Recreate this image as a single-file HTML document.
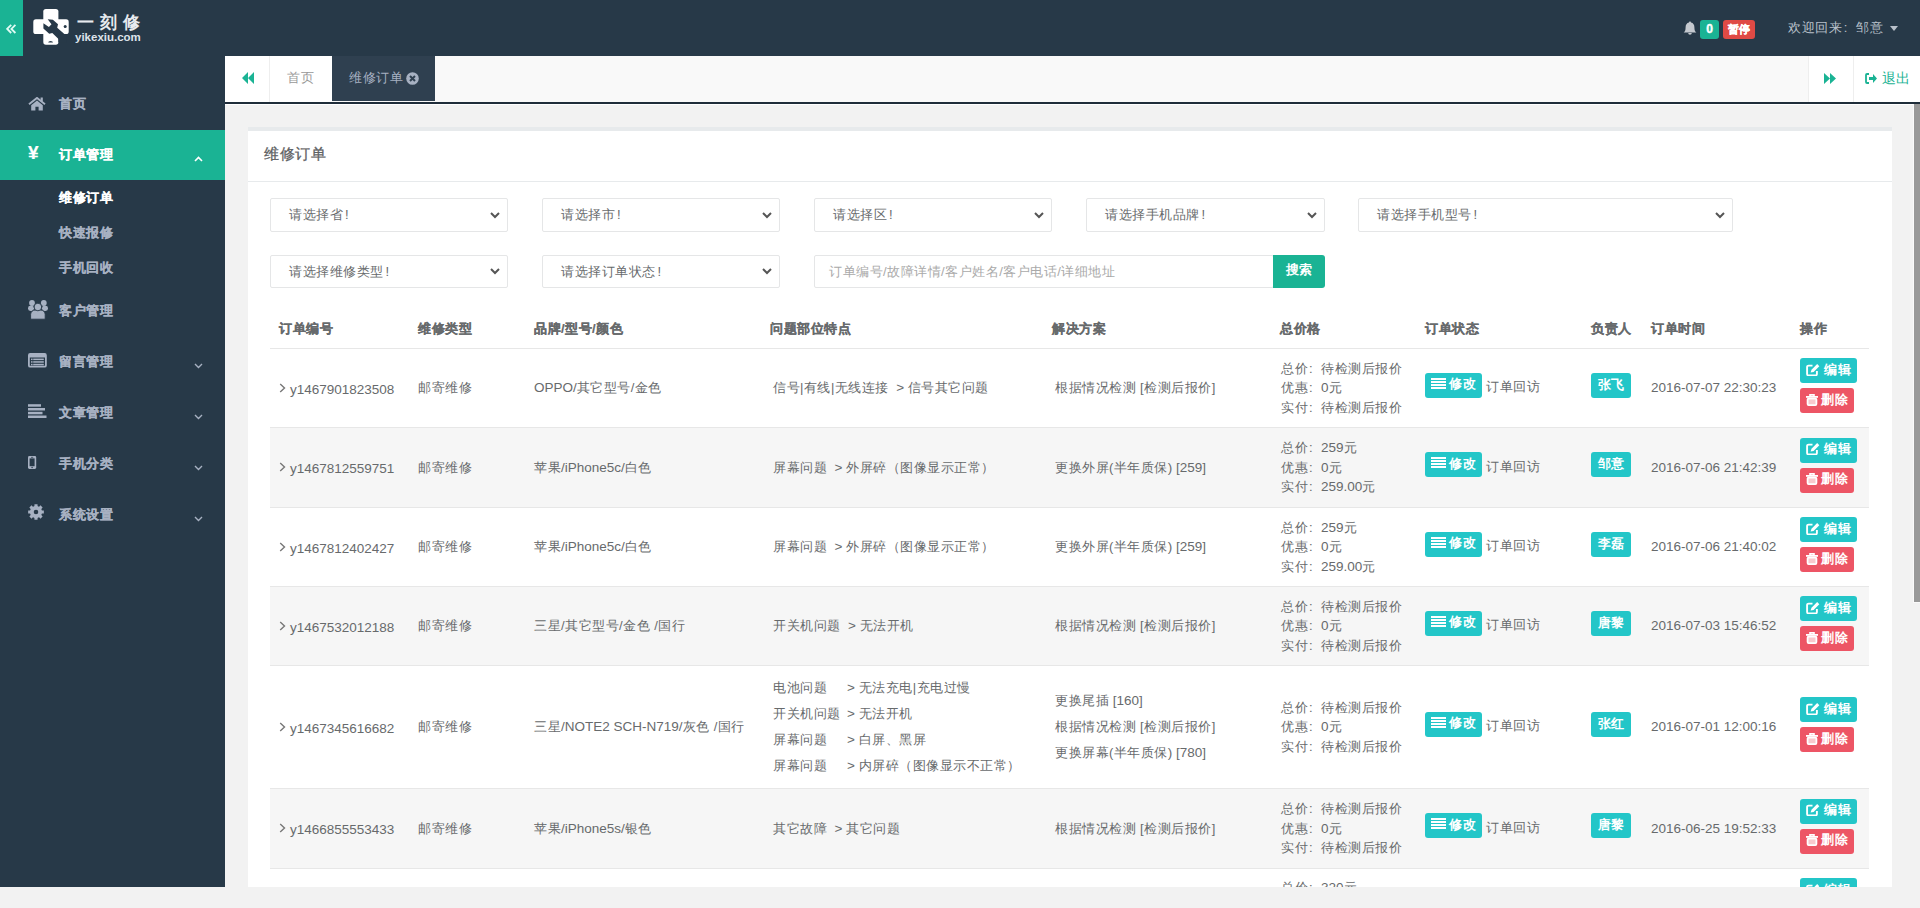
<!DOCTYPE html>
<html><head><meta charset="utf-8">
<style>
*{box-sizing:border-box;margin:0;padding:0}
html,body{width:1920px;height:908px;overflow:hidden}
body{position:relative;background:#f2f2f2;font-family:"Liberation Sans",sans-serif;font-size:13px;letter-spacing:0.5px;color:#676a6c}
.n{font-size:13.5px;letter-spacing:0}
.a{position:absolute}
#hdr{left:0;top:0;width:1920px;height:56px;background:#273948}
#tog{left:0;top:0;width:23px;height:56px;background:#1ab394}
#side{left:0;top:56px;width:225px;height:831px;background:#273948}
.nav{position:absolute;left:0;width:225px;height:51px;color:#a7b1c2;font-weight:bold;-webkit-text-stroke:0.2px currentColor}
.nav .t{position:absolute;left:59px;top:0;line-height:51px;white-space:nowrap}
.nav svg{position:absolute}
.sub{position:absolute;left:59px;height:35px;line-height:35px;color:#a7b1c2;font-weight:bold;white-space:nowrap;-webkit-text-stroke:0.2px currentColor}
#tabs{left:225px;top:56px;width:1695px;height:46px;background:#f9f9f9}
#tabline{left:225px;top:102px;width:1695px;height:2px;background:#1f2d3a}
#panel{left:248px;top:127px;width:1644px;height:760px;background:#fff;border-top:4px solid #e7eaec}
#bot{left:0;top:887px;width:1920px;height:21px;background:#f2f2f2}
#sb{left:1914px;top:104px;width:6px;height:497px;background:#999}
.sel{position:absolute;height:34px;border:1px solid #e5e6e7;border-radius:2px;background:#fff;color:#676a6c;white-space:nowrap}
.sel span{position:absolute;left:18px;top:0;line-height:32px}
.sel svg{position:absolute;top:13px}
.th{position:absolute;top:319px;line-height:20px;font-weight:bold;color:#676a6c;white-space:nowrap;-webkit-text-stroke:0.2px currentColor}
.hl{height:1px;background:#e7e7e7;left:270px;width:1599px}
.c{position:absolute;white-space:nowrap}
.btn{position:absolute;height:25px;border-radius:3px;color:#fff;font-weight:bold;line-height:25px;white-space:nowrap}
.info{background:#23c6c8}
.danger{background:#ed5565}
#clip{left:0;top:0;width:1920px;height:887px;overflow:hidden}
</style></head><body>
<div id="hdr" class="a"></div>
<div id="tog" class="a"><svg class="a" style="left:6px;top:24px" width="11" height="10" viewBox="0 0 11 10"><path d="M5.2 0.8L1.2 4.9 5.2 9M9.4 0.8L5.4 4.9 9.4 9" fill="none" stroke="#e0fbf4" stroke-width="1.8"/></svg></div>
<!-- logo -->
<svg class="a" style="left:33px;top:9px" width="37" height="37" viewBox="0 0 37 37">
 <rect x="10.3" y="0" width="15.1" height="35.7" rx="2.6" fill="#fff"/>
 <rect x="0.3" y="10.3" width="35.4" height="14.8" rx="2.6" fill="#fff"/>
 <path d="M14.7 10.3L19.9 10.7 25 15.3 24.2 18.7 32.5 26 26.5 31 19.3 23.9 16.2 24.8 10.4 19.6 10.4 14.2 15.9 17.9 18.5 15.3z" fill="#273948"/>
 <rect x="25.4" y="25.1" width="8" height="8" fill="#273948"/>
 <circle cx="32.2" cy="17.4" r="1.5" fill="#273948"/>
 <path d="M15.2 33.6a2.4 1.6 0 0 1 4.8 0z" fill="#273948"/>
</svg>
<div class="a" style="left:77px;top:11px;font-size:17px;font-weight:bold;color:#e8ebef;letter-spacing:6px;line-height:24px;white-space:nowrap">一刻修</div>
<div class="a" style="left:75px;top:31px;font-size:11.5px;font-weight:bold;color:#dde3ea;letter-spacing:0px;line-height:13px;white-space:nowrap">yikexiu.com</div>
<!-- header right -->
<svg class="a" style="left:1683px;top:21px" width="14" height="14" viewBox="0 0 14 14"><path d="M7 0.5c0.7 0 1 0.5 1 1 2.3 0.5 3.4 2.3 3.4 4.8 0 3 0.6 4.3 2 5.2H0.6c1.4-0.9 2-2.2 2-5.2C2.6 3.8 3.7 2 6 1.5c0-0.5 0.3-1 1-1z M5.2 12h3.6a1.8 1.8 0 0 1-3.6 0z" fill="#c5c9cf"/></svg>
<div class="a" style="left:1700px;top:20px;width:19px;height:19px;border-radius:3px;background:#1ab394;color:#fff;font-weight:bold;font-size:12px;letter-spacing:0;-webkit-text-stroke:0.4px #fff;line-height:19px;text-align:center">0</div>
<div class="a" style="left:1723px;top:20px;width:32px;height:19px;border-radius:3px;background:#df4a45;color:#fff;font-weight:bold;font-size:11px;letter-spacing:0;-webkit-text-stroke:0.3px #fff;line-height:19px;text-align:center">暂停</div>
<div class="a" style="left:1788px;top:18px;line-height:20px;letter-spacing:0.7px;color:#b8c0ca;white-space:nowrap">欢迎回来<span style="display:inline-block;width:13px;padding-left:1px">:</span>邹意</div>
<svg class="a" style="left:1890px;top:26px" width="8" height="5" viewBox="0 0 8 5"><path d="M0 0h8L4 5z" fill="#b8c0ca"/></svg>

<div id="side" class="a"></div>
<div class="nav" style="top:78px"><svg style="left:28px;top:19px" width="18" height="14" viewBox="0 0 18 14"><path d="M1 7.2L9 0.9l8 6.3" fill="none" stroke="#a7b1c2" stroke-width="1.9"/><rect x="12.6" y="0.5" width="2.2" height="4" fill="#a7b1c2"/><path d="M3.2 8.2L9 3.6l5.8 4.6V13.5H10.6V9.8H7.4V13.5H3.2z" fill="#a7b1c2"/></svg><div class="t">首页</div></div>
<div class="nav" style="top:130px;height:50px;background:#1ab394;color:#fff"><div class="a" style="left:28px;top:0;line-height:46px;font-size:19px;font-weight:bold;letter-spacing:0">¥</div><div class="t" style="line-height:49px">订单管理</div><svg style="left:194px;top:26px" width="9" height="6" viewBox="0 0 9 6"><path d="M1 5l3.5-3.5L8 5" fill="none" stroke="#fff" stroke-width="1.6"/></svg></div>
<div class="sub" style="top:180px;color:#fff">维修订单</div>
<div class="sub" style="top:215px">快速报修</div>
<div class="sub" style="top:250px">手机回收</div>
<div class="nav" style="top:285px"><svg style="left:28px;top:15px" width="21" height="20" viewBox="0 0 21 20"><circle cx="4" cy="3" r="2.9" fill="#a7b1c2"/><circle cx="15.8" cy="3" r="2.9" fill="#a7b1c2"/><rect x="0" y="5.8" width="6" height="5.2" rx="2.4" fill="#a7b1c2"/><rect x="14" y="5.8" width="6" height="5.2" rx="2.4" fill="#a7b1c2"/><path d="M2.6 19.2V14.6a4.6 4.6 0 0 1 4.6-4.6h5.4a4.6 4.6 0 0 1 4.6 4.6v4.6z" fill="#a7b1c2" stroke="#273948" stroke-width="0.9"/><circle cx="9.9" cy="7" r="3.8" fill="#a7b1c2" stroke="#273948" stroke-width="0.9"/></svg><div class="t">客户管理</div></div>
<div class="nav" style="top:336px"><svg style="left:28px;top:17px" width="19" height="15" viewBox="0 0 19 15"><rect x="0.9" y="0.9" width="17" height="12.8" rx="1.3" fill="none" stroke="#a7b1c2" stroke-width="1.8"/><rect x="0.9" y="0.9" width="17" height="3.6" fill="#a7b1c2"/><rect x="3" y="5.6" width="1.6" height="1.5" fill="#a7b1c2"/><rect x="5.2" y="5.6" width="10.6" height="1.5" fill="#a7b1c2"/><rect x="3" y="8.2" width="1.6" height="1.5" fill="#a7b1c2"/><rect x="5.2" y="8.2" width="10.6" height="1.5" fill="#a7b1c2"/><rect x="3" y="10.8" width="1.6" height="1.5" fill="#a7b1c2"/><rect x="5.2" y="10.8" width="10.6" height="1.5" fill="#a7b1c2"/></svg><div class="t">留言管理</div><svg style="left:194px;top:27px" width="9" height="6" viewBox="0 0 9 6"><path d="M1 1l3.5 3.5L8 1" fill="none" stroke="#a7b1c2" stroke-width="1.4"/></svg></div>
<div class="nav" style="top:387px"><svg style="left:28px;top:17px" width="19" height="14" viewBox="0 0 19 14"><rect y="0.2" width="13" height="2.5" fill="#a7b1c2"/><rect y="4" width="17" height="2.5" fill="#a7b1c2"/><rect y="7.8" width="14.5" height="2.5" fill="#a7b1c2"/><rect y="11.5" width="18.5" height="2.5" fill="#a7b1c2"/></svg><div class="t">文章管理</div><svg style="left:194px;top:27px" width="9" height="6" viewBox="0 0 9 6"><path d="M1 1l3.5 3.5L8 1" fill="none" stroke="#a7b1c2" stroke-width="1.4"/></svg></div>
<div class="nav" style="top:438px"><svg style="left:28px;top:18px" width="9" height="13" viewBox="0 0 9 13"><rect x="0" y="0" width="8.2" height="13" rx="1.4" fill="#a7b1c2"/><rect x="1.6" y="2.4" width="5" height="7.8" fill="#273948"/><rect x="3" y="0.9" width="2.2" height="0.7" fill="#273948"/><circle cx="4.1" cy="11.5" r="0.7" fill="#273948"/></svg><div class="t">手机分类</div><svg style="left:194px;top:27px" width="9" height="6" viewBox="0 0 9 6"><path d="M1 1l3.5 3.5L8 1" fill="none" stroke="#a7b1c2" stroke-width="1.4"/></svg></div>
<div class="nav" style="top:489px"><svg style="left:28px;top:15.3px" width="16" height="16" viewBox="0 0 16 16"><path d="M5.70 2.46 L6.40 2.01 L6.47 0.15 L9.53 0.15 L9.60 2.01 L10.30 2.46 L11.10 2.63 L12.47 1.37 L14.63 3.53 L13.37 4.90 L13.54 5.70 L13.99 6.40 L15.85 6.47 L15.85 9.53 L13.99 9.60 L13.54 10.30 L13.37 11.10 L14.63 12.47 L12.47 14.63 L11.10 13.37 L10.30 13.54 L9.60 13.99 L9.53 15.85 L6.47 15.85 L6.40 13.99 L5.70 13.54 L4.90 13.37 L3.53 14.63 L1.37 12.47 L2.63 11.10 L2.46 10.30 L2.01 9.60 L0.15 9.53 L0.15 6.47 L2.01 6.40 L2.46 5.70 L2.63 4.90 L1.37 3.53 L3.53 1.37 L4.90 2.63z M10.3 8a2.3 2.3 0 1 0-4.6 0a2.3 2.3 0 1 0 4.6 0z" fill="#a7b1c2" fill-rule="evenodd"/></svg><div class="t">系统设置</div><svg style="left:194px;top:27px" width="9" height="6" viewBox="0 0 9 6"><path d="M1 1l3.5 3.5L8 1" fill="none" stroke="#a7b1c2" stroke-width="1.4"/></svg></div>

<div id="tabs" class="a"></div>
<div class="a" style="left:225px;top:56px;width:107px;height:46px;background:#fff"></div>
<div class="a" style="left:1808px;top:56px;width:112px;height:46px;background:#fff"></div>
<svg class="a" style="left:242px;top:72px" width="12" height="12" viewBox="0 0 12 12"><path d="M0 6l6-6v12zM6 6l6-6v12z" fill="#1ab394"/></svg>
<div class="a" style="left:269px;top:56px;width:1px;height:46px;background:#eee"></div>
<div class="a" style="left:287px;top:68px;line-height:20px;color:#999;white-space:nowrap">首页</div>
<div class="a" style="left:332px;top:56px;width:103px;height:45px;background:#2f4050"></div>
<div class="a" style="left:349px;top:68px;line-height:20px;color:#a7b1c2;white-space:nowrap">维修订单</div>
<svg class="a" style="left:406px;top:72px" width="13" height="13" viewBox="0 0 13 13"><circle cx="6.5" cy="6.5" r="6.3" fill="#a7b1c2"/><path d="M4 4l5 5M9 4l-5 5" stroke="#2f4050" stroke-width="2"/></svg>
<div class="a" style="left:1808px;top:56px;width:1px;height:46px;background:#eee"></div>
<svg class="a" style="left:1824px;top:73px" width="12" height="11" viewBox="0 0 12 11"><path d="M0 0l6 5.5L0 11zM6 0l6 5.5L6 11z" fill="#1ab394"/></svg>
<div class="a" style="left:1853px;top:56px;width:1px;height:46px;background:#eee"></div>
<svg class="a" style="left:1865px;top:73px" width="12" height="11" viewBox="0 0 12 11"><path d="M4 1H2a1 1 0 0 0-1 1v7a1 1 0 0 0 1 1h2" fill="none" stroke="#1ab394" stroke-width="1.8"/><path d="M4 4h4V1l4 4.5L8 10V7H4z" fill="#1ab394"/></svg>
<div class="a" style="left:1882px;top:68px;line-height:21px;font-size:13.5px;letter-spacing:0.3px;color:#1ab394;white-space:nowrap">退出</div>
<div id="tabline" class="a"></div>
<div class="a" style="left:225px;top:104px;width:1695px;height:1px;background:#fff"></div>
<div id="sb" class="a"></div>
<div class="a" style="left:1913px;top:104px;width:7px;height:499px;background:#fafafa"></div>
<div id="sb2" class="a" style="left:1914px;top:104px;width:6px;height:498px;background:#999"></div>

<div id="panel" class="a"></div>
<div class="a" style="left:264px;top:144px;font-size:15px;letter-spacing:0.6px;line-height:20px;color:#5e6163;-webkit-text-stroke:0.3px #5e6163;white-space:nowrap">维修订单</div>
<div class="a" style="left:248px;top:181px;width:1644px;height:1px;background:#e7eaec"></div>

<div class="sel" style="left:270px;top:198px;width:238px"><span>请选择省<i style="font-style:normal;margin-left:2px">!</i></span><svg style="left:219px" width="10" height="7" viewBox="0 0 10 7"><path d="M1 1l4 4 4-4" fill="none" stroke="#555" stroke-width="2"/></svg></div>
<div class="sel" style="left:542px;top:198px;width:238px"><span>请选择市<i style="font-style:normal;margin-left:2px">!</i></span><svg style="left:219px" width="10" height="7" viewBox="0 0 10 7"><path d="M1 1l4 4 4-4" fill="none" stroke="#555" stroke-width="2"/></svg></div>
<div class="sel" style="left:814px;top:198px;width:238px"><span>请选择区<i style="font-style:normal;margin-left:2px">!</i></span><svg style="left:219px" width="10" height="7" viewBox="0 0 10 7"><path d="M1 1l4 4 4-4" fill="none" stroke="#555" stroke-width="2"/></svg></div>
<div class="sel" style="left:1086px;top:198px;width:239px"><span>请选择手机品牌<i style="font-style:normal;margin-left:2px">!</i></span><svg style="left:220px" width="10" height="7" viewBox="0 0 10 7"><path d="M1 1l4 4 4-4" fill="none" stroke="#555" stroke-width="2"/></svg></div>
<div class="sel" style="left:1358px;top:198px;width:375px"><span>请选择手机型号<i style="font-style:normal;margin-left:2px">!</i></span><svg style="left:356px" width="10" height="7" viewBox="0 0 10 7"><path d="M1 1l4 4 4-4" fill="none" stroke="#555" stroke-width="2"/></svg></div>
<div class="sel" style="left:270px;top:255px;width:238px;height:33px"><span style="line-height:31px">请选择维修类型<i style="font-style:normal;margin-left:2px">!</i></span><svg style="left:219px;top:12px" width="10" height="7" viewBox="0 0 10 7"><path d="M1 1l4 4 4-4" fill="none" stroke="#555" stroke-width="2"/></svg></div>
<div class="sel" style="left:542px;top:255px;width:238px;height:33px"><span style="line-height:31px">请选择订单状态<i style="font-style:normal;margin-left:2px">!</i></span><svg style="left:219px;top:12px" width="10" height="7" viewBox="0 0 10 7"><path d="M1 1l4 4 4-4" fill="none" stroke="#555" stroke-width="2"/></svg></div>
<div class="sel" style="left:814px;top:255px;width:460px;height:33px"><span style="left:14px;line-height:31px;color:#a9a9a9">订单编号/故障详情/客户姓名/客户电话/详细地址</span></div>
<div class="a" style="left:1273px;top:255px;width:52px;height:33px;background:#1ab394;border-radius:0 3px 3px 0;color:#fff;font-weight:bold;text-align:center;line-height:30px">搜索</div>

<div class="th" style="left:279px">订单编号</div>
<div class="th" style="left:418px">维修类型</div>
<div class="th" style="left:534px">品牌/型号/颜色</div>
<div class="th" style="left:770px">问题部位特点</div>
<div class="th" style="left:1052px">解决方案</div>
<div class="th" style="left:1280px">总价格</div>
<div class="th" style="left:1425px">订单状态</div>
<div class="th" style="left:1591px">负责人</div>
<div class="th" style="left:1651px">订单时间</div>
<div class="th" style="left:1800px">操作</div>

<div class="a hl" style="top:348px"></div>
<div id="clip" class="a">
<div class="a" style="left:270px;top:349px;width:1599px;height:78px;background:#fff"></div>
<div class="a hl" style="top:427px"></div>
<svg class="a" width="7" height="10" viewBox="0 0 7 10" style="left:279px;top:382.5px"><path d="M1.2 1l4.3 4-4.3 4" fill="none" stroke="#777" stroke-width="1.4"/></svg>
<div class="c" style="left:290px;top:379.5px;line-height:20px;"><span class="n">y1467901823508</span></div>
<div class="c" style="left:418px;top:378.0px;line-height:20px;">邮寄维修</div>
<div class="c" style="left:534px;top:378.0px;line-height:20px;"><span class="n">OPPO/</span>其它型号/金色</div>
<div class="c" style="left:773px;top:378.0px;line-height:20px;">信号|有线|无线连接<span class="n">&nbsp;&nbsp;&gt; </span>信号其它问题</div>
<div class="c" style="left:1055px;top:378.0px;line-height:20px;">根据情况检测 [检测后报价]</div>
<div class="btn info" style="left:1425px;top:372.5px;width:57px"><svg width="15" height="11" viewBox="0 0 15 11" style="position:absolute;left:6px;top:5px"><rect y="0" width="15" height="2" fill="#fff"/><rect y="3" width="15" height="2" fill="#fff"/><rect y="6" width="15" height="2" fill="#fff"/><rect y="9" width="15" height="2" fill="#fff"/></svg><span style="position:absolute;left:24px;top:-1.5px">修改</span></div>
<div class="c" style="left:1486px;top:377.0px;line-height:20px;">订单回访</div>
<div class="btn info" style="left:1591px;top:372.5px;width:40px;line-height:23px;text-align:center;letter-spacing:0;padding-left:0.5px">张飞</div>
<div class="c" style="left:1651px;top:378.0px;line-height:20px;"><span class="n">2016-07-07 22:30:23</span></div>
<div class="btn info" style="left:1800px;top:358.0px;width:57px"><svg width="14" height="12" viewBox="0 0 14 12" style="position:absolute;left:6px;top:5.5px"><path d="M6.5 1.6H2.6a1.5 1.5 0 0 0-1.5 1.5v6.8a1.5 1.5 0 0 0 1.5 1.5h6.8a1.5 1.5 0 0 0 1.5-1.5V7" fill="none" stroke="#fff" stroke-width="1.9"/><path d="M4.6 8.6l.9-2.8L11.2 0.1l2.1 2.1L7.6 7.9z" fill="#fff"/></svg><span style="position:absolute;left:24px;top:-1.5px">编辑</span></div>
<div class="btn danger" style="left:1800px;top:388.0px;width:54px"><svg width="12" height="12" viewBox="0 0 12 12" style="position:absolute;left:6px;top:5.5px"><rect x="0" y="2" width="12" height="1.8" fill="#fff"/><path d="M4 2.2V0.9h4v1.3" fill="none" stroke="#fff" stroke-width="1.6"/><rect x="1.6" y="4.6" width="8.8" height="6.5" rx="1" fill="#f9c9cd" stroke="#fff" stroke-width="1.8"/></svg><span style="position:absolute;left:21px;top:-1.5px">删除</span></div>
<div class="c" style="left:1281px;top:358.5px;line-height:20px;">总价<span style="display:inline-block;width:13px;padding-left:1px">:</span>待检测后报价</div>
<div class="c" style="left:1281px;top:378.0px;line-height:20px;">优惠<span style="display:inline-block;width:13px;padding-left:1px">:</span><span class="n">0</span>元</div>
<div class="c" style="left:1281px;top:397.5px;line-height:20px;">实付<span style="display:inline-block;width:13px;padding-left:1px">:</span>待检测后报价</div>
<div class="a" style="left:270px;top:428px;width:1599px;height:79px;background:#f6f6f6"></div>
<div class="a hl" style="top:507px"></div>
<svg class="a" width="7" height="10" viewBox="0 0 7 10" style="left:279px;top:462.0px"><path d="M1.2 1l4.3 4-4.3 4" fill="none" stroke="#777" stroke-width="1.4"/></svg>
<div class="c" style="left:290px;top:459.0px;line-height:20px;"><span class="n">y1467812559751</span></div>
<div class="c" style="left:418px;top:457.5px;line-height:20px;">邮寄维修</div>
<div class="c" style="left:534px;top:457.5px;line-height:20px;">苹果<span class="n">/iPhone5c/</span>白色</div>
<div class="c" style="left:773px;top:457.5px;line-height:20px;">屏幕问题<span class="n">&nbsp;&nbsp;&gt; </span>外屏碎（图像显示正常）</div>
<div class="c" style="left:1055px;top:457.5px;line-height:20px;">更换外屏(半年质保<span class="n">) [259]</span></div>
<div class="btn info" style="left:1425px;top:452.0px;width:57px"><svg width="15" height="11" viewBox="0 0 15 11" style="position:absolute;left:6px;top:5px"><rect y="0" width="15" height="2" fill="#fff"/><rect y="3" width="15" height="2" fill="#fff"/><rect y="6" width="15" height="2" fill="#fff"/><rect y="9" width="15" height="2" fill="#fff"/></svg><span style="position:absolute;left:24px;top:-1.5px">修改</span></div>
<div class="c" style="left:1486px;top:456.5px;line-height:20px;">订单回访</div>
<div class="btn info" style="left:1591px;top:452.0px;width:40px;line-height:23px;text-align:center;letter-spacing:0;padding-left:0.5px">邹意</div>
<div class="c" style="left:1651px;top:457.5px;line-height:20px;"><span class="n">2016-07-06 21:42:39</span></div>
<div class="btn info" style="left:1800px;top:437.5px;width:57px"><svg width="14" height="12" viewBox="0 0 14 12" style="position:absolute;left:6px;top:5.5px"><path d="M6.5 1.6H2.6a1.5 1.5 0 0 0-1.5 1.5v6.8a1.5 1.5 0 0 0 1.5 1.5h6.8a1.5 1.5 0 0 0 1.5-1.5V7" fill="none" stroke="#fff" stroke-width="1.9"/><path d="M4.6 8.6l.9-2.8L11.2 0.1l2.1 2.1L7.6 7.9z" fill="#fff"/></svg><span style="position:absolute;left:24px;top:-1.5px">编辑</span></div>
<div class="btn danger" style="left:1800px;top:467.5px;width:54px"><svg width="12" height="12" viewBox="0 0 12 12" style="position:absolute;left:6px;top:5.5px"><rect x="0" y="2" width="12" height="1.8" fill="#fff"/><path d="M4 2.2V0.9h4v1.3" fill="none" stroke="#fff" stroke-width="1.6"/><rect x="1.6" y="4.6" width="8.8" height="6.5" rx="1" fill="#f9c9cd" stroke="#fff" stroke-width="1.8"/></svg><span style="position:absolute;left:21px;top:-1.5px">删除</span></div>
<div class="c" style="left:1281px;top:438.0px;line-height:20px;">总价<span style="display:inline-block;width:13px;padding-left:1px">:</span><span class="n">259</span>元</div>
<div class="c" style="left:1281px;top:457.5px;line-height:20px;">优惠<span style="display:inline-block;width:13px;padding-left:1px">:</span><span class="n">0</span>元</div>
<div class="c" style="left:1281px;top:477.0px;line-height:20px;">实付<span style="display:inline-block;width:13px;padding-left:1px">:</span><span class="n">259.00</span>元</div>
<div class="a" style="left:270px;top:508px;width:1599px;height:78px;background:#fff"></div>
<div class="a hl" style="top:586px"></div>
<svg class="a" width="7" height="10" viewBox="0 0 7 10" style="left:279px;top:541.5px"><path d="M1.2 1l4.3 4-4.3 4" fill="none" stroke="#777" stroke-width="1.4"/></svg>
<div class="c" style="left:290px;top:538.5px;line-height:20px;"><span class="n">y1467812402427</span></div>
<div class="c" style="left:418px;top:537.0px;line-height:20px;">邮寄维修</div>
<div class="c" style="left:534px;top:537.0px;line-height:20px;">苹果<span class="n">/iPhone5c/</span>白色</div>
<div class="c" style="left:773px;top:537.0px;line-height:20px;">屏幕问题<span class="n">&nbsp;&nbsp;&gt; </span>外屏碎（图像显示正常）</div>
<div class="c" style="left:1055px;top:537.0px;line-height:20px;">更换外屏(半年质保<span class="n">) [259]</span></div>
<div class="btn info" style="left:1425px;top:531.5px;width:57px"><svg width="15" height="11" viewBox="0 0 15 11" style="position:absolute;left:6px;top:5px"><rect y="0" width="15" height="2" fill="#fff"/><rect y="3" width="15" height="2" fill="#fff"/><rect y="6" width="15" height="2" fill="#fff"/><rect y="9" width="15" height="2" fill="#fff"/></svg><span style="position:absolute;left:24px;top:-1.5px">修改</span></div>
<div class="c" style="left:1486px;top:536.0px;line-height:20px;">订单回访</div>
<div class="btn info" style="left:1591px;top:531.5px;width:40px;line-height:23px;text-align:center;letter-spacing:0;padding-left:0.5px">李磊</div>
<div class="c" style="left:1651px;top:537.0px;line-height:20px;"><span class="n">2016-07-06 21:40:02</span></div>
<div class="btn info" style="left:1800px;top:517.0px;width:57px"><svg width="14" height="12" viewBox="0 0 14 12" style="position:absolute;left:6px;top:5.5px"><path d="M6.5 1.6H2.6a1.5 1.5 0 0 0-1.5 1.5v6.8a1.5 1.5 0 0 0 1.5 1.5h6.8a1.5 1.5 0 0 0 1.5-1.5V7" fill="none" stroke="#fff" stroke-width="1.9"/><path d="M4.6 8.6l.9-2.8L11.2 0.1l2.1 2.1L7.6 7.9z" fill="#fff"/></svg><span style="position:absolute;left:24px;top:-1.5px">编辑</span></div>
<div class="btn danger" style="left:1800px;top:547.0px;width:54px"><svg width="12" height="12" viewBox="0 0 12 12" style="position:absolute;left:6px;top:5.5px"><rect x="0" y="2" width="12" height="1.8" fill="#fff"/><path d="M4 2.2V0.9h4v1.3" fill="none" stroke="#fff" stroke-width="1.6"/><rect x="1.6" y="4.6" width="8.8" height="6.5" rx="1" fill="#f9c9cd" stroke="#fff" stroke-width="1.8"/></svg><span style="position:absolute;left:21px;top:-1.5px">删除</span></div>
<div class="c" style="left:1281px;top:517.5px;line-height:20px;">总价<span style="display:inline-block;width:13px;padding-left:1px">:</span><span class="n">259</span>元</div>
<div class="c" style="left:1281px;top:537.0px;line-height:20px;">优惠<span style="display:inline-block;width:13px;padding-left:1px">:</span><span class="n">0</span>元</div>
<div class="c" style="left:1281px;top:556.5px;line-height:20px;">实付<span style="display:inline-block;width:13px;padding-left:1px">:</span><span class="n">259.00</span>元</div>
<div class="a" style="left:270px;top:587px;width:1599px;height:78px;background:#f6f6f6"></div>
<div class="a hl" style="top:665px"></div>
<svg class="a" width="7" height="10" viewBox="0 0 7 10" style="left:279px;top:620.5px"><path d="M1.2 1l4.3 4-4.3 4" fill="none" stroke="#777" stroke-width="1.4"/></svg>
<div class="c" style="left:290px;top:617.5px;line-height:20px;"><span class="n">y1467532012188</span></div>
<div class="c" style="left:418px;top:616.0px;line-height:20px;">邮寄维修</div>
<div class="c" style="left:534px;top:616.0px;line-height:20px;">三星/其它型号/金色 /国行</div>
<div class="c" style="left:773px;top:616.0px;line-height:20px;">开关机问题<span class="n">&nbsp;&nbsp;&gt; </span>无法开机</div>
<div class="c" style="left:1055px;top:616.0px;line-height:20px;">根据情况检测 [检测后报价]</div>
<div class="btn info" style="left:1425px;top:610.5px;width:57px"><svg width="15" height="11" viewBox="0 0 15 11" style="position:absolute;left:6px;top:5px"><rect y="0" width="15" height="2" fill="#fff"/><rect y="3" width="15" height="2" fill="#fff"/><rect y="6" width="15" height="2" fill="#fff"/><rect y="9" width="15" height="2" fill="#fff"/></svg><span style="position:absolute;left:24px;top:-1.5px">修改</span></div>
<div class="c" style="left:1486px;top:615.0px;line-height:20px;">订单回访</div>
<div class="btn info" style="left:1591px;top:610.5px;width:40px;line-height:23px;text-align:center;letter-spacing:0;padding-left:0.5px">唐黎</div>
<div class="c" style="left:1651px;top:616.0px;line-height:20px;"><span class="n">2016-07-03 15:46:52</span></div>
<div class="btn info" style="left:1800px;top:596.0px;width:57px"><svg width="14" height="12" viewBox="0 0 14 12" style="position:absolute;left:6px;top:5.5px"><path d="M6.5 1.6H2.6a1.5 1.5 0 0 0-1.5 1.5v6.8a1.5 1.5 0 0 0 1.5 1.5h6.8a1.5 1.5 0 0 0 1.5-1.5V7" fill="none" stroke="#fff" stroke-width="1.9"/><path d="M4.6 8.6l.9-2.8L11.2 0.1l2.1 2.1L7.6 7.9z" fill="#fff"/></svg><span style="position:absolute;left:24px;top:-1.5px">编辑</span></div>
<div class="btn danger" style="left:1800px;top:626.0px;width:54px"><svg width="12" height="12" viewBox="0 0 12 12" style="position:absolute;left:6px;top:5.5px"><rect x="0" y="2" width="12" height="1.8" fill="#fff"/><path d="M4 2.2V0.9h4v1.3" fill="none" stroke="#fff" stroke-width="1.6"/><rect x="1.6" y="4.6" width="8.8" height="6.5" rx="1" fill="#f9c9cd" stroke="#fff" stroke-width="1.8"/></svg><span style="position:absolute;left:21px;top:-1.5px">删除</span></div>
<div class="c" style="left:1281px;top:596.5px;line-height:20px;">总价<span style="display:inline-block;width:13px;padding-left:1px">:</span>待检测后报价</div>
<div class="c" style="left:1281px;top:616.0px;line-height:20px;">优惠<span style="display:inline-block;width:13px;padding-left:1px">:</span><span class="n">0</span>元</div>
<div class="c" style="left:1281px;top:635.5px;line-height:20px;">实付<span style="display:inline-block;width:13px;padding-left:1px">:</span>待检测后报价</div>
<div class="a" style="left:270px;top:666px;width:1599px;height:122px;background:#fff"></div>
<div class="a hl" style="top:788px"></div>
<svg class="a" width="7" height="10" viewBox="0 0 7 10" style="left:279px;top:721.5px"><path d="M1.2 1l4.3 4-4.3 4" fill="none" stroke="#777" stroke-width="1.4"/></svg>
<div class="c" style="left:290px;top:718.5px;line-height:20px;"><span class="n">y1467345616682</span></div>
<div class="c" style="left:418px;top:717.0px;line-height:20px;">邮寄维修</div>
<div class="c" style="left:534px;top:717.0px;line-height:20px;">三星<span class="n">/NOTE2 SCH-N719/</span>灰色 /国行</div>
<div class="c" style="left:773px;top:678.0px;line-height:20px;">电池问题</div>
<div class="c" style="left:847px;top:678.0px;line-height:20px;"><span class="n">&gt; </span>无法充电|充电过慢</div>
<div class="c" style="left:773px;top:704.0px;line-height:20px;">开关机问题</div>
<div class="c" style="left:847px;top:704.0px;line-height:20px;"><span class="n">&gt; </span>无法开机</div>
<div class="c" style="left:773px;top:730.0px;line-height:20px;">屏幕问题</div>
<div class="c" style="left:847px;top:730.0px;line-height:20px;"><span class="n">&gt; </span>白屏、黑屏</div>
<div class="c" style="left:773px;top:756.0px;line-height:20px;">屏幕问题</div>
<div class="c" style="left:847px;top:756.0px;line-height:20px;"><span class="n">&gt; </span>内屏碎（图像显示不正常）</div>
<div class="c" style="left:1055px;top:691.0px;line-height:20px;">更换尾插<span class="n"> [160]</span></div>
<div class="c" style="left:1055px;top:717.0px;line-height:20px;">根据情况检测 [检测后报价]</div>
<div class="c" style="left:1055px;top:743.0px;line-height:20px;">更换屏幕(半年质保<span class="n">) [780]</span></div>
<div class="btn info" style="left:1425px;top:711.5px;width:57px"><svg width="15" height="11" viewBox="0 0 15 11" style="position:absolute;left:6px;top:5px"><rect y="0" width="15" height="2" fill="#fff"/><rect y="3" width="15" height="2" fill="#fff"/><rect y="6" width="15" height="2" fill="#fff"/><rect y="9" width="15" height="2" fill="#fff"/></svg><span style="position:absolute;left:24px;top:-1.5px">修改</span></div>
<div class="c" style="left:1486px;top:716.0px;line-height:20px;">订单回访</div>
<div class="btn info" style="left:1591px;top:711.5px;width:40px;line-height:23px;text-align:center;letter-spacing:0;padding-left:0.5px">张红</div>
<div class="c" style="left:1651px;top:717.0px;line-height:20px;"><span class="n">2016-07-01 12:00:16</span></div>
<div class="btn info" style="left:1800px;top:697.0px;width:57px"><svg width="14" height="12" viewBox="0 0 14 12" style="position:absolute;left:6px;top:5.5px"><path d="M6.5 1.6H2.6a1.5 1.5 0 0 0-1.5 1.5v6.8a1.5 1.5 0 0 0 1.5 1.5h6.8a1.5 1.5 0 0 0 1.5-1.5V7" fill="none" stroke="#fff" stroke-width="1.9"/><path d="M4.6 8.6l.9-2.8L11.2 0.1l2.1 2.1L7.6 7.9z" fill="#fff"/></svg><span style="position:absolute;left:24px;top:-1.5px">编辑</span></div>
<div class="btn danger" style="left:1800px;top:727.0px;width:54px"><svg width="12" height="12" viewBox="0 0 12 12" style="position:absolute;left:6px;top:5.5px"><rect x="0" y="2" width="12" height="1.8" fill="#fff"/><path d="M4 2.2V0.9h4v1.3" fill="none" stroke="#fff" stroke-width="1.6"/><rect x="1.6" y="4.6" width="8.8" height="6.5" rx="1" fill="#f9c9cd" stroke="#fff" stroke-width="1.8"/></svg><span style="position:absolute;left:21px;top:-1.5px">删除</span></div>
<div class="c" style="left:1281px;top:697.5px;line-height:20px;">总价<span style="display:inline-block;width:13px;padding-left:1px">:</span>待检测后报价</div>
<div class="c" style="left:1281px;top:717.0px;line-height:20px;">优惠<span style="display:inline-block;width:13px;padding-left:1px">:</span><span class="n">0</span>元</div>
<div class="c" style="left:1281px;top:736.5px;line-height:20px;">实付<span style="display:inline-block;width:13px;padding-left:1px">:</span>待检测后报价</div>
<div class="a" style="left:270px;top:789px;width:1599px;height:79px;background:#f6f6f6"></div>
<div class="a hl" style="top:868px"></div>
<svg class="a" width="7" height="10" viewBox="0 0 7 10" style="left:279px;top:823.0px"><path d="M1.2 1l4.3 4-4.3 4" fill="none" stroke="#777" stroke-width="1.4"/></svg>
<div class="c" style="left:290px;top:820.0px;line-height:20px;"><span class="n">y1466855553433</span></div>
<div class="c" style="left:418px;top:818.5px;line-height:20px;">邮寄维修</div>
<div class="c" style="left:534px;top:818.5px;line-height:20px;">苹果<span class="n">/iPhone5s/</span>银色</div>
<div class="c" style="left:773px;top:818.5px;line-height:20px;">其它故障<span class="n">&nbsp;&nbsp;&gt; </span>其它问题</div>
<div class="c" style="left:1055px;top:818.5px;line-height:20px;">根据情况检测 [检测后报价]</div>
<div class="btn info" style="left:1425px;top:813.0px;width:57px"><svg width="15" height="11" viewBox="0 0 15 11" style="position:absolute;left:6px;top:5px"><rect y="0" width="15" height="2" fill="#fff"/><rect y="3" width="15" height="2" fill="#fff"/><rect y="6" width="15" height="2" fill="#fff"/><rect y="9" width="15" height="2" fill="#fff"/></svg><span style="position:absolute;left:24px;top:-1.5px">修改</span></div>
<div class="c" style="left:1486px;top:817.5px;line-height:20px;">订单回访</div>
<div class="btn info" style="left:1591px;top:813.0px;width:40px;line-height:23px;text-align:center;letter-spacing:0;padding-left:0.5px">唐黎</div>
<div class="c" style="left:1651px;top:818.5px;line-height:20px;"><span class="n">2016-06-25 19:52:33</span></div>
<div class="btn info" style="left:1800px;top:798.5px;width:57px"><svg width="14" height="12" viewBox="0 0 14 12" style="position:absolute;left:6px;top:5.5px"><path d="M6.5 1.6H2.6a1.5 1.5 0 0 0-1.5 1.5v6.8a1.5 1.5 0 0 0 1.5 1.5h6.8a1.5 1.5 0 0 0 1.5-1.5V7" fill="none" stroke="#fff" stroke-width="1.9"/><path d="M4.6 8.6l.9-2.8L11.2 0.1l2.1 2.1L7.6 7.9z" fill="#fff"/></svg><span style="position:absolute;left:24px;top:-1.5px">编辑</span></div>
<div class="btn danger" style="left:1800px;top:828.5px;width:54px"><svg width="12" height="12" viewBox="0 0 12 12" style="position:absolute;left:6px;top:5.5px"><rect x="0" y="2" width="12" height="1.8" fill="#fff"/><path d="M4 2.2V0.9h4v1.3" fill="none" stroke="#fff" stroke-width="1.6"/><rect x="1.6" y="4.6" width="8.8" height="6.5" rx="1" fill="#f9c9cd" stroke="#fff" stroke-width="1.8"/></svg><span style="position:absolute;left:21px;top:-1.5px">删除</span></div>
<div class="c" style="left:1281px;top:799.0px;line-height:20px;">总价<span style="display:inline-block;width:13px;padding-left:1px">:</span>待检测后报价</div>
<div class="c" style="left:1281px;top:818.5px;line-height:20px;">优惠<span style="display:inline-block;width:13px;padding-left:1px">:</span><span class="n">0</span>元</div>
<div class="c" style="left:1281px;top:838.0px;line-height:20px;">实付<span style="display:inline-block;width:13px;padding-left:1px">:</span>待检测后报价</div>
<div class="a" style="left:270px;top:869px;width:1599px;height:131px;background:#fff"></div>
<div class="a hl" style="top:1000px"></div>
<div class="btn info" style="left:1800px;top:878px;width:57px"><svg width="14" height="12" viewBox="0 0 14 12" style="position:absolute;left:6px;top:5.5px"><path d="M6.5 1.6H2.6a1.5 1.5 0 0 0-1.5 1.5v6.8a1.5 1.5 0 0 0 1.5 1.5h6.8a1.5 1.5 0 0 0 1.5-1.5V7" fill="none" stroke="#fff" stroke-width="1.9"/><path d="M4.6 8.6l.9-2.8L11.2 0.1l2.1 2.1L7.6 7.9z" fill="#fff"/></svg><span style="position:absolute;left:24px;top:-1.5px">编辑</span></div>
<div class="c" style="left:1281px;top:877.5px;line-height:20px;">总价<span style="display:inline-block;width:13px;padding-left:1px">:</span><span class="n">320</span>元</div>
<div class="c" style="left:1281px;top:897.0px;line-height:20px;">优惠<span style="display:inline-block;width:13px;padding-left:1px">:</span><span class="n">0</span>元</div>
<div class="c" style="left:1281px;top:916.5px;line-height:20px;">实付<span style="display:inline-block;width:13px;padding-left:1px">:</span><span class="n">320.00</span>元</div>
</div>
<div id="bot" class="a"></div>
</body></html>
